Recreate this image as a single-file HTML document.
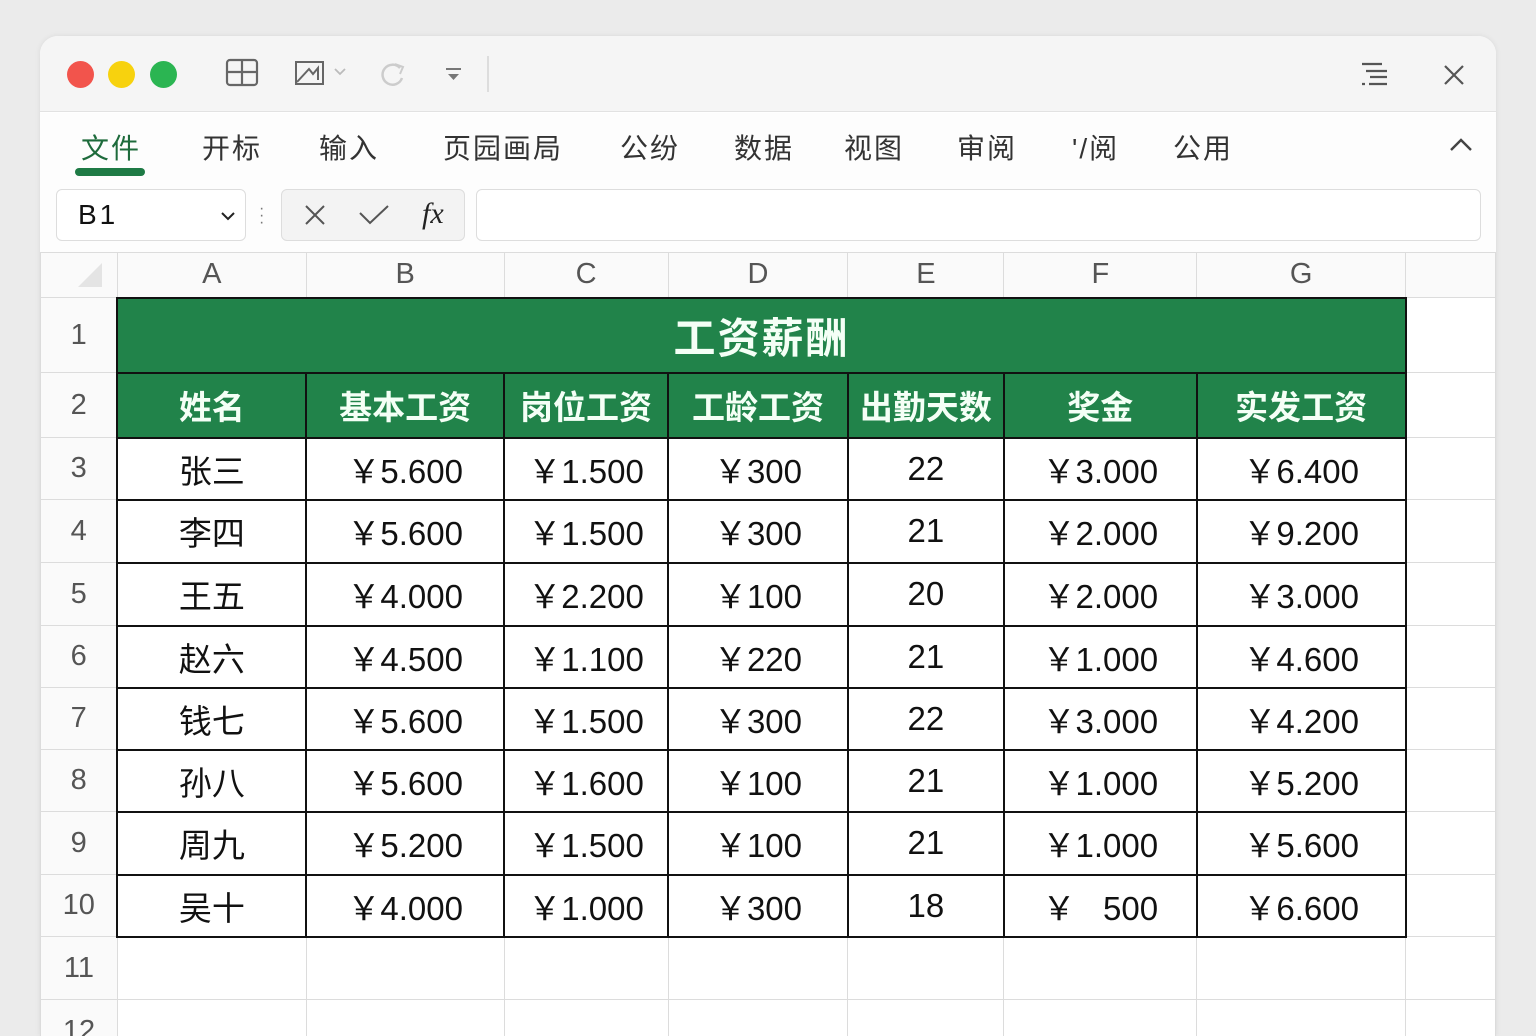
<!DOCTYPE html>
<html><head><meta charset="utf-8"><style>
*{box-sizing:border-box;margin:0;padding:0}
body{width:1536px;height:1024px;background:#ebebeb;font-family:"Liberation Sans","Noto Sans CJK SC",sans-serif;overflow:hidden;position:relative}
.win{position:absolute;left:40px;top:36px;width:1456px;height:1000px;background:#fff;border-radius:18px 18px 0 0;overflow:hidden;box-shadow:0 0 6px rgba(0,0,0,.08)}
.title{position:absolute;left:0;top:0;width:100%;height:76px;background:#f5f5f5;border-bottom:1px solid #e2e2e2}
.dot{position:absolute;top:25px;width:27px;height:27px;border-radius:50%}
.rib{position:absolute;left:0;top:77px;width:100%;height:139px;background:#fdfdfd}
.tab{position:absolute;top:92px;font-size:28px;color:#333;letter-spacing:2px}
.grid{position:absolute;left:0;top:216px;border-collapse:collapse;table-layout:fixed}
.grid td{border:1px solid #dcdcdc;text-align:center;font-size:33px;color:#111;padding:0;overflow:hidden;white-space:nowrap}
.grid tr.h td{background:#fafafa;color:#555;font-size:29px;font-weight:normal}
.grid td.rn{background:#fafafa;color:#555;font-size:29px}
.grid td.d{border:2px solid #111}
.grid td.g{background:#21834a;color:#f4fff6;font-weight:bold;border:2px solid #111}
</style></head><body>
<div class="win">
 <div class="title">
  <div class="dot" style="left:27px;background:#f2544c"></div>
  <div class="dot" style="left:68px;background:#f7d20e"></div>
  <div class="dot" style="left:110px;background:#2bb552"></div>
  <svg style="position:absolute;left:185px;top:22px" width="34" height="30"><rect x="2" y="2" width="30" height="25" rx="3" fill="none" stroke="#666" stroke-width="2.2"/><path d="M2 14H32M17 2V27" stroke="#666" stroke-width="2.2"/></svg>
  <svg style="position:absolute;left:253px;top:22px" width="60" height="30"><rect x="3" y="4" width="27" height="22" fill="none" stroke="#666" stroke-width="2"/><path d="M4 24L16 11L20 16L25 10V22" fill="none" stroke="#666" stroke-width="2"/><path d="M42 11L47 16L52 11" fill="none" stroke="#bbb" stroke-width="1.8"/></svg>
  <svg style="position:absolute;left:338px;top:24px" width="30" height="26"><path d="M22 8A10 10 0 1 0 24 18" fill="none" stroke="#ccc" stroke-width="2.5"/><path d="M17 4L25 7L22 14" fill="none" stroke="#ccc" stroke-width="2"/></svg>
  <svg style="position:absolute;left:404px;top:30px" width="20" height="16"><path d="M2 3H17" stroke="#777" stroke-width="2"/><path d="M4 8H15L9.5 14Z" fill="#777"/></svg>
  <div style="position:absolute;left:447px;top:20px;width:2px;height:36px;background:#ddd"></div>
  <svg style="position:absolute;left:1320px;top:26px" width="30" height="26"><path d="M2 2H22M6 9H27M10 15H27M2 22H5M9 22H27" stroke="#555" stroke-width="2.2"/></svg>
  <svg style="position:absolute;left:1403px;top:28px" width="22" height="22"><path d="M2 2L20 20M20 2L2 20" stroke="#555" stroke-width="2.2"/></svg>
 </div>
 <div class="rib">
  <div class="tab" style="left:41px;top:14px;color:#1e6b3c">文件</div>
  <div style="position:absolute;left:35px;top:55px;width:70px;height:8px;border-radius:4px;background:#1e7a45"></div>
  <div class="tab" style="left:162px;top:14px">开标</div>
  <div class="tab" style="left:279px;top:14px">输入</div>
  <div class="tab" style="left:403px;top:14px">页园画局</div>
  <div class="tab" style="left:580px;top:14px">公纷</div>
  <div class="tab" style="left:694px;top:14px">数据</div>
  <div class="tab" style="left:804px;top:14px">视图</div>
  <div class="tab" style="left:917px;top:14px">审阅</div>
  <div class="tab" style="left:1032px;top:14px">'/阅</div>
  <div class="tab" style="left:1133px;top:14px">公用</div>
  <svg style="position:absolute;left:1408px;top:24px" width="26" height="16"><path d="M3 13L13 3L23 13" fill="none" stroke="#444" stroke-width="2.4"/></svg>
  <div style="position:absolute;left:16px;top:76px;width:190px;height:52px;background:#fff;border:1px solid #ddd;border-radius:6px"></div>
  <div style="position:absolute;left:38px;top:86px;font-size:28px;color:#111;letter-spacing:3px">B1</div>
  <svg style="position:absolute;left:180px;top:98px" width="16" height="10"><path d="M2 2L8 8L14 2" fill="none" stroke="#222" stroke-width="2"/></svg>
  <div style="position:absolute;left:219px;top:92px;color:#777;font-size:16px;line-height:7px">·<br>·<br>·</div>
  <div style="position:absolute;left:241px;top:76px;width:184px;height:52px;background:#f3f3f3;border:1px solid #ddd;border-radius:6px"></div>
  <svg style="position:absolute;left:264px;top:91px" width="22" height="22"><path d="M2 2L20 20M20 2L2 20" stroke="#555" stroke-width="2"/></svg>
  <svg style="position:absolute;left:318px;top:91px" width="32" height="22"><path d="M2 9L12 19L30 2" fill="none" stroke="#555" stroke-width="2"/></svg>
  <div style="position:absolute;left:382px;top:84px;font-family:'Liberation Serif',serif;font-style:italic;font-size:30px;color:#222">fx</div>
  <div style="position:absolute;left:436px;top:76px;width:1005px;height:52px;background:#fff;border:1px solid #ddd;border-radius:6px"></div>
 </div>
 <table class="grid">
  <colgroup><col style="width:77px"><col style="width:189px"><col style="width:198px"><col style="width:164px"><col style="width:180px"><col style="width:156px"><col style="width:193px"><col style="width:209px"><col style="width:90px"></colgroup>
  <tr class="h" style="height:44px"><td><svg width="30" height="30" style="margin-left:20px;margin-top:6px"><path d="M28 4V28H4Z" fill="#e4e4e4"/></svg></td><td>A</td><td>B</td><td>C</td><td>D</td><td>E</td><td>F</td><td>G</td><td></td></tr>
  <tr style="height:75px"><td class="rn">1</td><td class="g" colspan="7" style="font-size:42px;letter-spacing:2px">工资薪酬</td><td></td></tr>
  <tr style="height:65px"><td class="rn">2</td><td class="g">姓名</td><td class="g">基本工资</td><td class="g">岗位工资</td><td class="g">工龄工资</td><td class="g">出勤天数</td><td class="g">奖金</td><td class="g">实发工资</td><td></td></tr>
  <tr style="height:62px"><td class="rn">3</td><td class="d">张三</td><td class="d">￥5.600</td><td class="d">￥1.500</td><td class="d">￥300</td><td class="d">22</td><td class="d">￥3.000</td><td class="d">￥6.400</td><td></td></tr>
  <tr style="height:63px"><td class="rn">4</td><td class="d">李四</td><td class="d">￥5.600</td><td class="d">￥1.500</td><td class="d">￥300</td><td class="d">21</td><td class="d">￥2.000</td><td class="d">￥9.200</td><td></td></tr>
  <tr style="height:63px"><td class="rn">5</td><td class="d">王五</td><td class="d">￥4.000</td><td class="d">￥2.200</td><td class="d">￥100</td><td class="d">20</td><td class="d">￥2.000</td><td class="d">￥3.000</td><td></td></tr>
  <tr style="height:62px"><td class="rn">6</td><td class="d">赵六</td><td class="d">￥4.500</td><td class="d">￥1.100</td><td class="d">￥220</td><td class="d">21</td><td class="d">￥1.000</td><td class="d">￥4.600</td><td></td></tr>
  <tr style="height:62px"><td class="rn">7</td><td class="d">钱七</td><td class="d">￥5.600</td><td class="d">￥1.500</td><td class="d">￥300</td><td class="d">22</td><td class="d">￥3.000</td><td class="d">￥4.200</td><td></td></tr>
  <tr style="height:62px"><td class="rn">8</td><td class="d">孙八</td><td class="d">￥5.600</td><td class="d">￥1.600</td><td class="d">￥100</td><td class="d">21</td><td class="d">￥1.000</td><td class="d">￥5.200</td><td></td></tr>
  <tr style="height:63px"><td class="rn">9</td><td class="d">周九</td><td class="d">￥5.200</td><td class="d">￥1.500</td><td class="d">￥100</td><td class="d">21</td><td class="d">￥1.000</td><td class="d">￥5.600</td><td></td></tr>
  <tr style="height:62px"><td class="rn">10</td><td class="d">吴十</td><td class="d">￥4.000</td><td class="d">￥1.000</td><td class="d">￥300</td><td class="d">18</td><td class="d">￥&nbsp;&nbsp;&nbsp;500</td><td class="d">￥6.600</td><td></td></tr>
  <tr style="height:63px"><td class="rn">11</td><td></td><td></td><td></td><td></td><td></td><td></td><td></td><td></td></tr>
  <tr style="height:63px"><td class="rn">12</td><td></td><td></td><td></td><td></td><td></td><td></td><td></td><td></td></tr>
 </table>
</div>
</body></html>
